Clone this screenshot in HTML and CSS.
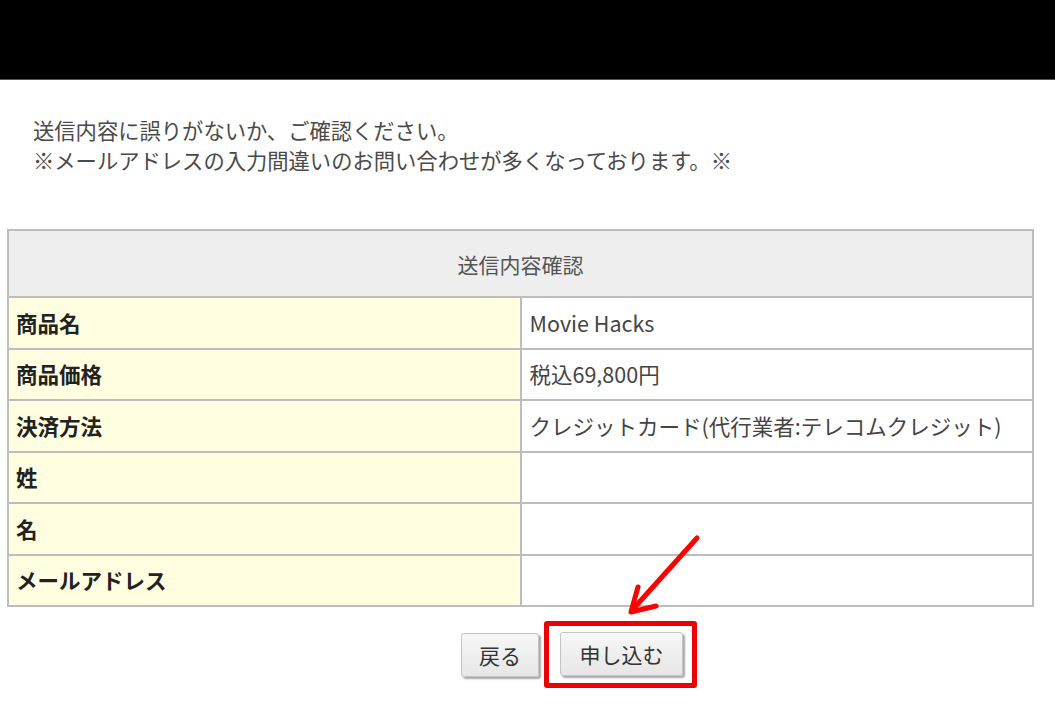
FILE: index.html
```html
<!DOCTYPE html>
<html lang="ja">
<head>
<meta charset="utf-8">
<title>送信内容確認</title>
<link rel="stylesheet" href="styles.css">
</head>
<body>
<div class="topbar"></div>
<div class="intro">
  <p>送信内容に誤りがないか、ご確認ください。</p>
  <p>※メールアドレスの入力間違いのお問い合わせが多くなっております。※</p>
</div>
<table class="confirm">
  <tr><th colspan="2" class="head">送信内容確認</th></tr>
  <tr><th>商品名</th><td>Movie Hacks</td></tr>
  <tr><th>商品価格</th><td>税込69,800円</td></tr>
  <tr><th>決済方法</th><td>クレジットカード(代行業者:テレコムクレジット)</td></tr>
  <tr><th>姓</th><td></td></tr>
  <tr><th>名</th><td></td></tr>
  <tr><th>メールアドレス</th><td></td></tr>
</table>
<div class="actions">
  <button class="btn back">戻る</button>
  <div class="highlight"><button class="btn submit">申し込む</button></div>
</div>
<svg class="arrow" width="1055" height="708" viewBox="0 0 1055 708">
  <line x1="697" y1="538" x2="634" y2="608" stroke="#f00" stroke-width="5" stroke-linecap="round"/>
  <polyline points="638,587 631,612 656,606" fill="none" stroke="#f00" stroke-width="5" stroke-linecap="round" stroke-linejoin="round"/>
</svg>
</body>
</html>
```
FILE: styles.css
```css
html, body {
  margin: 0;
  padding: 0;
  background: #fff;
}
body {
  font-family: "Noto Sans CJK JP", "Noto Sans", sans-serif;
  color: #333;
  width: 1055px;
  height: 708px;
  overflow: hidden;
  position: relative;
}
.topbar {
  height: 79px;
  background: #000;
  border-bottom: 1px solid #555;
}
.intro {
  padding: 35px 0 0 33px;
  height: 114px;
  box-sizing: border-box;
  font-size: 21.3px;
  line-height: 30px;
  color: #4a4a4a;
}
.intro p {
  margin: 0;
}
.confirm {
  margin: 35px 0 0 7px;
  width: 1027px;
  border-collapse: collapse;
  table-layout: fixed;
  font-size: 21.5px;
}
.confirm th, .confirm td {
  border: 2px solid #bdbdbd;
  height: 49.5px;
  padding: 0 0 0 8px;
  text-align: left;
  vertical-align: middle;
  line-height: 24px;
}
.confirm th {
  background: #fffee0;
  font-weight: bold;
  color: #222;
  width: 50%;
  padding-left: 7px;
}
.confirm td {
  background: #fff;
  color: #444;
}
.confirm th.head {
  background: #eeeeee;
  font-weight: normal;
  text-align: center;
  color: #555;
  height: 65px;
  padding: 0;
  font-size: 21px;
}
.actions {
  display: flex;
  align-items: center;
  gap: 5px;
  padding-left: 461px;
  margin-top: 14px;
}
.btn {
  font-family: "Noto Sans CJK JP", "Noto Sans", sans-serif;
  font-size: 21px;
  color: #333;
  background: linear-gradient(#f7f7f7, #e6e6e6);
  border: 1px solid #c4c4c4;
  border-radius: 3px;
  box-shadow: 2px 2px 2px rgba(0,0,0,0.35);
  height: 44px;
  padding: 0;
  line-height: 40px;
}
.back {
  width: 78px;
}
.submit {
  width: 123px;
}
.highlight {
  border: 5px solid #ee0000;
  border-radius: 3px;
  padding: 6px 9px 7px 11px;
  display: flex;
}
.arrow {
  position: absolute;
  left: 0;
  top: 0;
  pointer-events: none;
}
```
